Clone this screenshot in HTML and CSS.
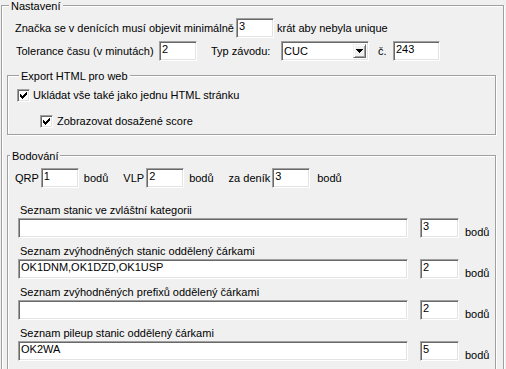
FILE: index.html
```html
<!DOCTYPE html>
<html lang="cs">
<head>
    <meta charset="UTF-8">
    <meta name="viewport" content="width=device-width, initial-scale=1.0">
    <title>Nastavení</title>
    <link rel="stylesheet" href="styles.css">
</head>
<body>

    <fieldset class="group group-main">
        <legend>Nastavení</legend>

        <div class="row row-unique">
            <span class="lbl lbl-unique">Značka se v denících musí objevit minimálně</span>
            <input type="text" class="field num" value="3">
            <span class="after">krát aby nebyla unique</span>
        </div>

        <div class="row row-tolerance">
            <span class="lbl lbl-tolerance">Tolerance času (v minutách)</span>
            <input type="text" class="field num" value="2">
            <span class="lbl lbl-type">Typ závodu:</span>
            <div class="combo">
                <span class="combo-value">CUC</span>
                <span class="combo-btn">
                    <svg width="7" height="4" viewBox="0 0 7 4" shape-rendering="crispEdges"><path d="M0 0h7v1h-1v1h-1v1h-1v1h-1v-1h-1v-1h-1v-1H0z"/></svg>
                </span>
            </div>
            <span class="lbl lbl-no">č.</span>
            <input type="text" class="field contest-no" value="243">
        </div>

        <fieldset class="group group-export">
            <legend>Export HTML pro web</legend>
            <label class="check">
                <span class="box"><svg width="7" height="7" viewBox="0 0 7 7" shape-rendering="crispEdges"><path d="M0 2h1v3H0zM1 3h1v3H1zM2 4h1v3H2zM3 3h1v3H3zM4 2h1v3H4zM5 1h1v3H5zM6 0h1v3H6z"/></svg></span>
                <span>Ukládat vše také jako jednu HTML stránku</span>
            </label>
            <label class="check check-sub">
                <span class="box"><svg width="7" height="7" viewBox="0 0 7 7" shape-rendering="crispEdges"><path d="M0 2h1v3H0zM1 3h1v3H1zM2 4h1v3H2zM3 3h1v3H3zM4 2h1v3H4zM5 1h1v3H5zM6 0h1v3H6z"/></svg></span>
                <span>Zobrazovat dosažené score</span>
            </label>
        </fieldset>

        <fieldset class="group group-points">
            <legend>Bodování</legend>

            <div class="row row-points">
                <span>QRP</span>
                <input type="text" class="field num" value="1">
                <span class="pts-unit">bodů</span>
                <span class="pts-label pts-vlp">VLP</span>
                <input type="text" class="field num" value="2">
                <span class="pts-unit">bodů</span>
                <span class="pts-label pts-log">za deník</span>
                <input type="text" class="field num" value="3">
                <span class="pts-unit pts-unit-last">bodů</span>
            </div>

            <div class="list list-first">
                <div class="list-label">Seznam stanic ve zvláštní kategorii</div>
                <div class="list-row">
                    <input type="text" class="field wide" value="">
                    <input type="text" class="field num" value="3">
                    <span class="list-unit">bodů</span>
                </div>
            </div>

            <div class="list">
                <div class="list-label">Seznam zvýhodněných stanic oddělený čárkami</div>
                <div class="list-row">
                    <input type="text" class="field wide" value="OK1DNM,OK1DZD,OK1USP">
                    <input type="text" class="field num" value="2">
                    <span class="list-unit">bodů</span>
                </div>
            </div>

            <div class="list">
                <div class="list-label">Seznam zvýhodněných prefixů oddělený čárkami</div>
                <div class="list-row">
                    <input type="text" class="field wide" value="">
                    <input type="text" class="field num" value="2">
                    <span class="list-unit">bodů</span>
                </div>
            </div>

            <div class="list">
                <div class="list-label">Seznam pileup stanic oddělený čárkami</div>
                <div class="list-row">
                    <input type="text" class="field wide" value="OK2WA">
                    <input type="text" class="field num" value="5">
                    <span class="list-unit">bodů</span>
                </div>
            </div>
        </fieldset>
    </fieldset>

</body>
</html>
```

FILE: styles.css
```css
* {
    box-sizing: border-box;
}

body {
    margin: 0;
    width: 506px;
    height: 369px;
    overflow: hidden;
    background-color: #f0f0f0;
    color: #000;
    font-family: "Liberation Sans", Arial, sans-serif;
    font-size: 11px;
    line-height: 13px;
}

/* group boxes (etched frame) */
.group {
    margin: 0;
    padding: 0;
    min-width: 0;
    border: 1px solid #a0a0a0;
    box-shadow: inset 1px 1px 0 #fff, 1px 1px 0 #fff;
}

.group > legend {
    padding: 1px 2px 0;
    margin-left: 2px;
    line-height: 10px;
    background-color: #f0f0f0;
}

.group-main {
    width: 503px;
    margin-left: 1px;
}

.group-main > legend {
    margin-left: 7px;
}

.group-export,
.group-points {
    margin: 9px 7px 0 5px;
}

.group-export {
    padding: 8px 0 6px 9px;
}

/* the frame continues below the visible window */
.group-points {
    margin-top: 15px;
    padding: 0 0 11px 0;
}

/* rows */
.row {
    display: flex;
    align-items: center;
    height: 20px;
}

.row-unique {
    margin-top: 7px;
    padding-left: 13px;
}

.row-tolerance {
    margin-top: 3px;
    padding-left: 14px;
}

.lbl {
    white-space: nowrap;
}

.lbl-unique {
    width: 221px;
}

.after {
    margin-left: 3px;
}

.lbl-tolerance {
    width: 143px;
}

.lbl-type {
    width: 70px;
    margin-left: 14px;
}

.lbl-no {
    width: 15px;
    margin-left: 9px;
}

/* sunken edit fields */
.field {
    height: 20px;
    margin: 0;
    padding: 0 2px 4px;
    border: 1px solid;
    border-color: #a0a0a0 #fff #fff #a0a0a0;
    box-shadow: inset 1px 1px 0 #696969, inset -1px -1px 0 #e3e3e3;
    background-color: #fff;
    color: #000;
    font: inherit;
    line-height: 13px;
    outline: none;
}

.num {
    width: 38px;
}

.contest-no {
    width: 47px;
}

.wide {
    width: 390px;
}

/* combo box */
.combo {
    display: flex;
    width: 88px;
    height: 20px;
    padding: 2px;
    border: 1px solid;
    border-color: #a0a0a0 #fff #fff #a0a0a0;
    box-shadow: inset 1px 1px 0 #696969, inset -1px -1px 0 #e3e3e3;
    background-color: #fff;
}

.combo-value {
    flex: 1;
    padding-top: 1px;
    line-height: 13px;
}

.combo-btn {
    display: flex;
    align-items: center;
    justify-content: center;
    width: 13px;
    border: 1px solid;
    border-color: #f0f0f0 #696969 #696969 #f0f0f0;
    box-shadow: inset 1px 1px 0 #fff, inset -1px -1px 0 #a0a0a0;
    background-color: #f0f0f0;
}

/* check boxes */
.check {
    display: flex;
    align-items: center;
    gap: 3px;
    height: 13px;
}

.check-sub {
    margin-top: 13px;
    padding-left: 23px;
    gap: 4px;
}

.box {
    display: flex;
    align-items: center;
    justify-content: center;
    width: 13px;
    height: 13px;
    border: 1px solid;
    border-color: #a0a0a0 #fff #fff #a0a0a0;
    box-shadow: inset 1px 1px 0 #696969, inset -1px -1px 0 #e3e3e3;
    background-color: #fff;
}

/* points row */
.row-points {
    margin-top: 7px;
    padding-left: 7px;
}

.row-points .field {
    margin-left: 2px;
}

.pts-unit {
    margin-left: 5px;
}

.pts-unit-last {
    margin-left: 7px;
}

.pts-vlp {
    margin-left: 15px;
}

.pts-log {
    margin-left: 15px;
}

/* station lists */
.list {
    margin: 6px 0 0 10px;
}

.list-first {
    margin-top: 16px;
}

.list-label {
    padding-left: 2px;
    margin-bottom: 1px;
}

.list-row {
    display: flex;
}

.list-row .num {
    margin-left: 12px;
    width: 39px;
}

.list-unit {
    margin-left: 6px;
    padding-top: 8px;
}
```
